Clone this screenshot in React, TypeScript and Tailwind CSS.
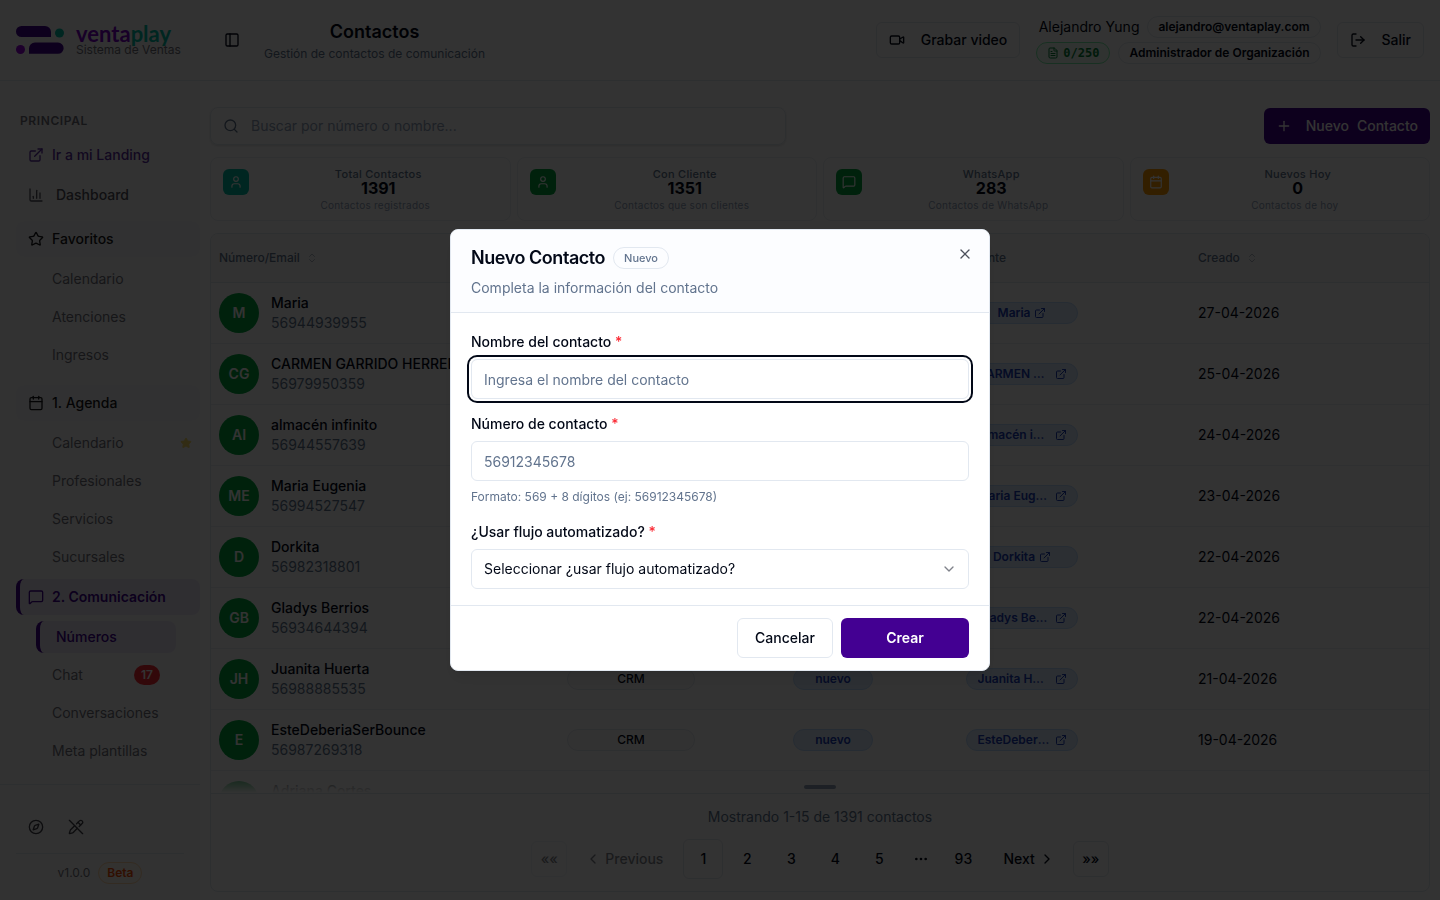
import { useState } from 'react';
import type { ReactNode } from 'react';
import {
  Calendar,
  ChartColumn,
  ChevronDown,
  ChevronLeft,
  ChevronRight,
  ChevronsUpDown,
  Compass,
  Ellipsis,
  ExternalLink,
  FileText,
  LogOut,
  MessageSquare,
  PanelLeft,
  PencilOff,
  Plus,
  Search,
  Star,
  User,
  Video,
  X,
} from 'lucide-react';

const contacts = [
  { initials: 'M', name: 'Maria', phone: '56944939955', date: '27-04-2026' },
  { initials: 'CG', name: 'CARMEN GARRIDO HERRERA', phone: '56979950359', date: '25-04-2026' },
  { initials: 'AI', name: 'almacén infinito', phone: '56944557639', date: '24-04-2026' },
  { initials: 'ME', name: 'Maria Eugenia', phone: '56994527547', date: '23-04-2026' },
  { initials: 'D', name: 'Dorkita', phone: '56982318801', date: '22-04-2026' },
  { initials: 'GB', name: 'Gladys Berrios', phone: '56934644394', date: '22-04-2026' },
  { initials: 'JH', name: 'Juanita Huerta', phone: '56988885535', date: '21-04-2026' },
  { initials: 'E', name: 'EsteDeberiaSerBounce', phone: '56987269318', date: '19-04-2026' },
  { initials: 'AC', name: 'Adriana Cortes', phone: '', date: '' },
];

const stats = [
  { title: 'Total Contactos', value: '1391', hint: 'Contactos registrados', icon: User, color: 'bg-[#00bfa5]' },
  { title: 'Con Cliente', value: '1351', hint: 'Contactos que son clientes', icon: User, color: 'bg-green-600' },
  { title: 'WhatsApp', value: '283', hint: 'Contactos de WhatsApp', icon: MessageSquare, color: 'bg-green-600' },
  { title: 'Nuevos Hoy', value: '0', hint: 'Contactos de hoy', icon: Calendar, color: 'bg-amber-500' },
];

function Logo() {
  return (
    <svg width="48" height="30" viewBox="0 0 48 30" className="shrink-0" aria-hidden="true">
      <path d="M5.500 1H29a6 6 0 0 1 6 6v5H5.500a5.500 5.500 0 0 1 0-11Z" fill="#430092" />
      <circle cx="43.500" cy="8" r="4.500" fill="#00bfa5" />
      <circle cx="4.500" cy="24.500" r="4.500" fill="#9000d8" />
      <path d="M19 17.500h23a5.600 5.600 0 0 1 0 11.300H13v-5.300a6 6 0 0 1 6-6Z" fill="#430092" />
    </svg>
  );
}

function NavGroup({ icon, label, active = false }: { icon: ReactNode; label: string; active?: boolean }) {
  return (
    <button
      className={
        active
          ? 'flex h-9 w-full items-center gap-2 rounded-lg border-l-4 border-[#430092] bg-[#ebe7f6] pl-2 text-sm font-semibold text-[#430092]'
          : 'flex h-9 w-full items-center gap-2 rounded-lg bg-zinc-100/60 pl-3 text-sm font-medium text-zinc-900'
      }
    >
      {icon}
      {label}
    </button>
  );
}

function NavItem({ label, active = false, badge, starred }: { label: string; active?: boolean; badge?: string; starred?: boolean }) {
  return (
    <li className="flex items-center">
      <a
        href="#"
        className={
          active
            ? 'flex h-8 w-[140px] items-center rounded-lg border-l-4 border-[#430092] bg-[#ebe7f6] px-4 text-sm font-medium text-[#430092]'
            : 'flex h-8 w-[140px] items-center justify-between px-4 text-sm whitespace-nowrap text-zinc-500'
        }
      >
        {label}
        {badge && (
          <span className="flex h-5 w-[26px] items-center justify-center rounded-full bg-red-500 text-xs font-semibold text-white">
            {badge}
          </span>
        )}
      </a>
      {starred && <Star className="ml-1 h-3 w-3 fill-yellow-400 text-yellow-400 opacity-60" />}
    </li>
  );
}

function Sidebar() {
  return (
    <aside className="flex w-[200px] shrink-0 flex-col bg-[#fafafa]">
      <div className="flex h-[81px] shrink-0 items-center gap-3 border-b border-slate-200 pl-4">
        <Logo />
        <div className="flex flex-col whitespace-nowrap">
          <span className="font-['Lato'] text-[22px] leading-5 font-bold text-[#7a00c8]">
            venta<span className="text-[#00bfa5]">play</span>
          </span>
          <span className="text-xs leading-3 text-zinc-500">Sistema de Ventas</span>
        </div>
      </div>

      <nav className="flex-1 overflow-hidden pt-8 pl-4">
        <p className="mb-2 pl-1 text-xs leading-4 font-semibold tracking-wider text-zinc-500">PRINCIPAL</p>
        <a href="#" className="mb-1 flex h-9 items-center gap-2 pl-3 text-sm font-medium text-[#5a2ca0]">
          <ExternalLink className="h-4 w-4" />
          Ir a mi Landing
        </a>
        <a href="#" className="mb-2 flex h-9 items-center gap-3 pl-3 text-sm font-medium text-zinc-600">
          <ChartColumn className="h-4 w-4" />
          Dashboard
        </a>

        <NavGroup icon={<Star className="h-4 w-4" />} label="Favoritos" />
        <ul className="mt-1.5 mb-3.5 flex flex-col gap-1.5 pl-5">
          <NavItem label="Calendario" />
          <NavItem label="Atenciones" />
          <NavItem label="Ingresos" />
        </ul>

        <NavGroup icon={<Calendar className="h-4 w-4" />} label="1. Agenda" />
        <ul className="my-1.5 flex flex-col gap-1.5 pl-5">
          <NavItem label="Calendario" starred />
          <NavItem label="Profesionales" />
          <NavItem label="Servicios" />
          <NavItem label="Sucursales" />
        </ul>

        <NavGroup active icon={<MessageSquare className="h-4 w-4" />} label="2. Comunicación" />
        <ul className="my-1.5 flex flex-col gap-1.5 pl-5">
          <NavItem label="Números" active />
          <NavItem label="Chat" badge="17" />
          <NavItem label="Conversaciones" />
          <NavItem label="Meta plantillas" />
        </ul>
      </nav>

      <div className="shrink-0 border-t border-slate-200 px-4 pt-6 pb-4">
        <div className="flex border-b border-slate-200 pb-2">
          <button aria-label="Explorar" className="flex h-9 w-10 items-center justify-center text-zinc-700">
            <Compass className="h-4 w-4" />
          </button>
          <button aria-label="Desactivar edición" className="flex h-9 w-10 items-center justify-center text-zinc-700">
            <PencilOff className="h-4 w-4" />
          </button>
        </div>
        <div className="mt-2 flex items-center justify-center gap-2 text-xs text-zinc-500">
          v1.0.0
          <span className="flex h-[22px] items-center rounded-full border border-orange-200 bg-orange-50 px-2 font-semibold text-orange-600">
            Beta
          </span>
        </div>
      </div>
    </aside>
  );
}

function Header() {
  const pill = 'flex h-[22px] items-center rounded-full border px-2.5 text-xs font-semibold';
  return (
    <header className="flex h-[81px] shrink-0 items-center border-b border-slate-200 pr-4 pl-6">
      <button aria-label="Alternar menú" className="mr-6 text-slate-950">
        <PanelLeft className="h-4 w-4" />
      </button>
      <div className="text-center">
        <h1 className="text-lg leading-7 font-semibold">Contactos</h1>
        <p className="text-xs leading-4 text-slate-500">Gestión de contactos de comunicación</p>
      </div>

      <div className="ml-auto flex items-center gap-4">
        <button className="flex h-9 items-center gap-4 rounded-md border border-slate-200 px-3 text-sm font-medium">
          <Video className="h-4 w-4" />
          Grabar video
        </button>
        <div className="flex flex-col items-end gap-1">
          <div className="flex items-center gap-2 text-sm leading-5">
            Alejandro Yung
            <span className={`${pill} border-slate-200`}>alejandro@ventaplay.com</span>
          </div>
          <div className="flex items-center gap-2">
            <span className={`${pill} gap-1 border-green-300 bg-green-50 font-['DejaVu_Sans_Mono'] text-green-700`}>
              <FileText className="h-3 w-3" />
              0/250
            </span>
            <span className={`${pill} border-slate-200`}>Administrador de Organización</span>
          </div>
        </div>
        <button className="flex h-9 items-center gap-4 rounded-md border border-slate-200 px-3 text-sm font-medium">
          <LogOut className="h-4 w-4" />
          Salir
        </button>
      </div>
    </header>
  );
}

function ContactsTable() {
  return (
    <div className="relative min-h-0 flex-1 overflow-hidden border-b border-slate-200">
      <table className="w-full table-fixed text-left">
        <thead>
          <tr className="h-12 border-b border-slate-200 bg-neutral-50 text-xs text-slate-500">
            <th className="w-[348px] px-2 font-medium">
              <span className="flex items-center gap-1.5">
                Número/Email
                <ChevronsUpDown className="h-3 w-3 opacity-50" />
              </span>
            </th>
            <th className="w-[226px] px-2 font-medium">Canal</th>
            <th className="w-[173px] px-2 font-medium">Estado</th>
            <th className="w-[232px] px-2 font-medium">Cliente</th>
            <th className="px-2 font-medium">
              <span className="flex items-center gap-1.5">
                Creado
                <ChevronsUpDown className="h-3 w-3 opacity-50" />
              </span>
            </th>
          </tr>
        </thead>
        <tbody>
          {contacts.map((c) => (
            <tr key={c.name} className="h-[61px] border-b border-slate-200/70 text-sm">
              <td className="px-2">
                <div className="flex items-center gap-3">
                  <span className="flex h-10 w-10 shrink-0 items-center justify-center rounded-full bg-green-600 font-semibold text-white">
                    {c.initials}
                  </span>
                  <div className="whitespace-nowrap">
                    <div className="h-5 font-medium">{c.name}</div>
                    <div className="h-5 text-slate-500">{c.phone}</div>
                  </div>
                </div>
              </td>
              {c.phone && (
                <>
                  <td className="px-2">
                    <span className="flex h-[22px] w-32 items-center justify-center rounded-full border border-slate-200 bg-neutral-50 text-xs font-medium">
                      CRM
                    </span>
                  </td>
                  <td className="px-2">
                    <span className="flex h-[22px] w-20 items-center justify-center rounded-full border border-blue-200 bg-blue-100 text-xs font-semibold text-blue-800">
                      nuevo
                    </span>
                  </td>
                  <td className="px-2">
                    <a
                      href="#"
                      className="flex h-[22px] w-28 items-center justify-center gap-1 rounded-full border border-blue-200 bg-blue-100 px-2.5 text-xs font-semibold text-blue-800"
                    >
                      <span className="max-w-[73px] truncate">{c.name}</span>
                      <ExternalLink className="h-3 w-3 shrink-0" />
                    </a>
                  </td>
                  <td className="px-2">{c.date}</td>
                </>
              )}
            </tr>
          ))}
        </tbody>
      </table>
      {/* scroll hint */}
      <div className="absolute inset-x-0 bottom-0 flex h-6 items-end justify-center bg-linear-to-t from-white to-transparent pb-1">
        <span className="h-1 w-8 rounded-full bg-slate-400" />
      </div>
    </div>
  );
}

function Pagination() {
  const [page, setPage] = useState(1);
  const square = 'flex h-10 w-10 items-center justify-center rounded-md';
  return (
    <div className="flex shrink-0 flex-col items-center gap-3 pt-[13px] pb-3 text-sm">
      <p className="text-slate-500">Mostrando 1-15 de 1391 contactos</p>
      <div className="flex items-center gap-2 font-medium">
        <button disabled className="h-9 w-9 rounded-md border border-slate-200 opacity-50">
          ««
        </button>
        <nav className="flex items-center gap-1">
          <button disabled className="flex h-10 items-center gap-1 pr-4 pl-2.5 opacity-50">
            <ChevronLeft className="h-4 w-4" />
            Previous
          </button>
          {[1, 2, 3, 4, 5].map((n) => (
            <button
              key={n}
              onClick={() => setPage(n)}
              className={n === page ? `${square} border border-slate-200` : square}
            >
              {n}
            </button>
          ))}
          <span className="flex h-9 w-9 items-center justify-center">
            <Ellipsis className="h-4 w-4" />
          </span>
          <button className={square}>93</button>
          <button className="flex h-10 items-center gap-1 pr-2.5 pl-4">
            Next
            <ChevronRight className="h-4 w-4" />
          </button>
        </nav>
        <button className="h-9 w-9 rounded-md border border-slate-200">»»</button>
      </div>
    </div>
  );
}

function NewContactDialog() {
  const field = 'h-10 w-full rounded-md border border-slate-200 bg-white px-3 text-sm outline-none placeholder:text-slate-500';
  const label = 'text-sm leading-[18px] font-medium';
  return (
    <div className="fixed inset-0 z-50 flex items-center justify-center bg-black/80">
      <div
        role="dialog"
        aria-labelledby="dialog-title"
        className="relative w-full max-w-[540px] overflow-hidden rounded-lg border border-slate-200 bg-white shadow-lg"
      >
        <div className="flex flex-col gap-2 border-b border-slate-200 bg-[#fcfdff] px-5 pt-4 pb-3.5">
          <div className="flex h-6 items-center gap-2">
            <h2 id="dialog-title" className="text-lg leading-6 font-semibold tracking-tight">
              Nuevo Contacto
            </h2>
            <span className="flex h-[22px] items-center rounded-full border border-slate-200 px-2.5 text-[11px] font-medium text-slate-500">
              Nuevo
            </span>
          </div>
          <p className="text-sm leading-5 text-slate-500">Completa la información del contacto</p>
        </div>
        <button aria-label="Cerrar" className="absolute top-4 right-4 opacity-70">
          <X className="h-4 w-4" />
        </button>

        <form className="flex flex-col gap-4 px-5 pt-5 pb-4">
          <div className="flex flex-col gap-2">
            <label htmlFor="name" className={label}>
              Nombre del contacto <span className="text-red-500">*</span>
            </label>
            <input
              id="name"
              placeholder="Ingresa el nombre del contacto"
              className={`${field} ring-2 ring-[#020817] ring-offset-2`}
            />
          </div>
          <div className="flex flex-col gap-2">
            <label htmlFor="phone" className={label}>
              Número de contacto <span className="text-red-500">*</span>
            </label>
            <input id="phone" placeholder="56912345678" className={field} />
            <p className="pb-0.5 text-xs leading-4 text-slate-500">Formato: 569 + 8 dígitos (ej: 56912345678)</p>
          </div>
          <div className="flex flex-col gap-2">
            <label htmlFor="flow" className={label}>
              ¿Usar flujo automatizado? <span className="text-red-500">*</span>
            </label>
            <div className="relative">
              <select id="flow" className={`${field} appearance-none`}>
                <option>Seleccionar ¿usar flujo automatizado?</option>
                <option>Sí</option>
                <option>No</option>
              </select>
              <ChevronDown className="pointer-events-none absolute top-3 right-3 h-4 w-4 opacity-50" />
            </div>
          </div>
        </form>

        <div className="flex justify-end gap-2 border-t border-slate-200 px-5 py-3 text-sm font-medium">
          <button className="h-10 w-24 rounded-md border border-slate-200">Cancelar</button>
          <button className="h-10 w-32 rounded-md bg-[#430092] font-semibold text-white">Crear</button>
        </div>
      </div>
    </div>
  );
}

export default function App() {
  return (
    <div className="flex h-screen overflow-hidden bg-white font-['Inter',sans-serif] text-[#020817]">
      <Sidebar />

      <div className="flex min-w-0 flex-1 flex-col">
        <Header />

        <main className="flex min-h-0 flex-1 flex-col gap-3 px-2.5 pt-[26px] pb-2">
          <div className="flex items-center justify-between">
            <label className="flex h-[38px] w-full max-w-xl items-center gap-3 rounded-lg border border-slate-200 px-3 shadow-sm">
              <Search className="h-4 w-4 text-slate-500" />
              <input
                aria-label="Buscar"
                placeholder="Buscar por número o nombre..."
                className="flex-1 text-sm outline-none placeholder:text-slate-400"
              />
            </label>
            <button className="flex h-9 items-center gap-2 rounded-md bg-[#430092] px-3 text-sm font-medium text-white">
              <Plus className="mr-1.5 h-4 w-4" />
              <span>Nuevo</span>
              <span>Contacto</span>
            </button>
          </div>

          <div className="grid grid-cols-4 gap-1.5">
            {stats.map(({ title, value, hint, icon: Icon, color }) => (
              <div key={title} className="flex h-16 gap-2.5 rounded-lg border border-slate-200/80 px-3 pt-[11px]">
                <span className={`flex h-[26px] w-[26px] items-center justify-center rounded-md text-white ${color}`}>
                  <Icon className="h-3.5 w-3.5" />
                </span>
                <div className="flex flex-1 flex-col items-center">
                  <span className="text-[11px] leading-[10px] font-medium tracking-wide text-slate-500">{title}</span>
                  <span className="text-base leading-[18px] font-bold">{value}</span>
                  <span className="mt-0.5 pr-1.5 text-[10px] leading-3 tracking-wide text-slate-400">{hint}</span>
                </div>
              </div>
            ))}
          </div>

          <section className="flex min-h-0 flex-1 flex-col overflow-hidden rounded-lg border border-slate-200">
            <ContactsTable />
            <Pagination />
          </section>
        </main>
      </div>

      <NewContactDialog />
    </div>
  );
}
